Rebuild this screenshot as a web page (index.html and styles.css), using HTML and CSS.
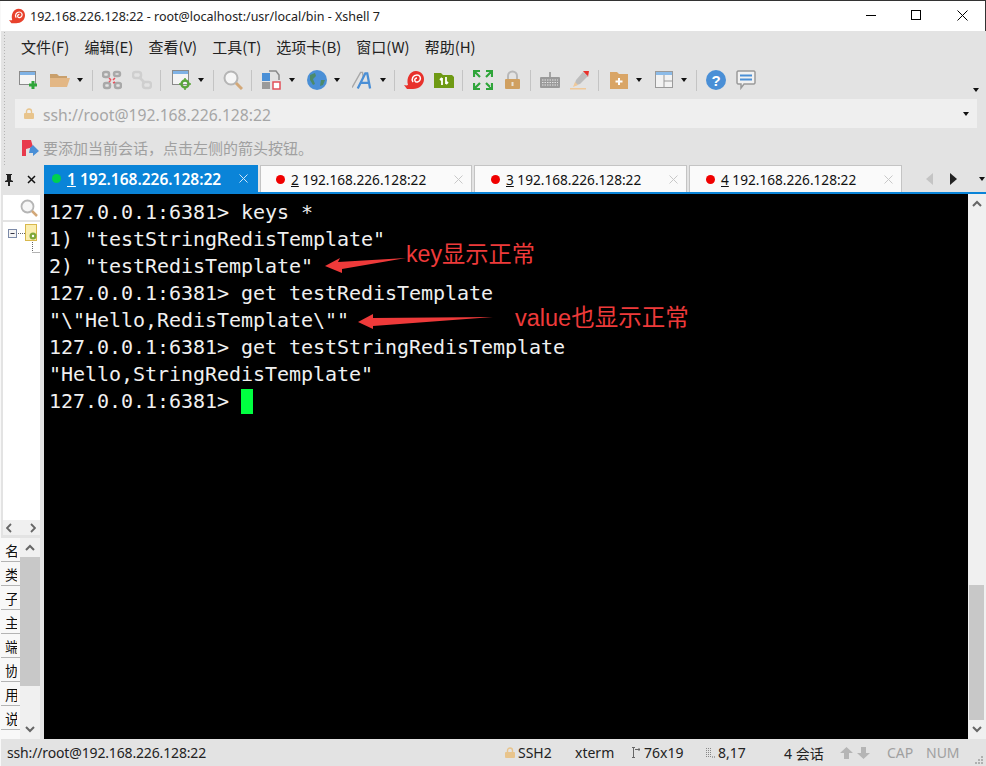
FILE: index.html
```html
<!DOCTYPE html>
<html lang="zh">
<head>
<meta charset="utf-8">
<title>Xshell 7</title>
<link rel="stylesheet" href="styles.css">
</head>
<body>
<div class="app">
  <header class="titlebar">
    <svg class="snail" viewBox="0 0 20 20"><path d="M0 15c3 1 4 0 4 0C2 8 6 1 12 1c5 0 8 4 8 8 0 6-5 10-11 10H3z" fill="#e8412c"/><path d="M9 12c-2-3 0-7 4-7 3 0 4 3 3 5s-4 3-5 1 1-3 2-3" fill="none" stroke="#fff" stroke-width="1.500"/></svg>
    <span class="title-text">192.168.226.128:22 - root@localhost:/usr/local/bin - Xshell 7</span>
    <div class="winctl">
      <svg class="wc" viewBox="0 0 45 12"><path d="M0 5.500h10" stroke="#000"/></svg>
      <svg class="wc wc-max" viewBox="0 0 46 12"><rect x=".5" y=".5" width="9" height="9" fill="none" stroke="#000"/></svg>
      <svg class="wc wc-close" viewBox="0 0 28 12"><path d="M.5.500l10 10M10.500.500l-10 10" stroke="#000" fill="none"/></svg>
    </div>
  </header>

  <div class="chrome">
    <nav class="menu">
      <span class="m">文件(F)</span><span class="m">编辑(E)</span><span class="m">查看(V)</span><span class="m">工具(T)</span><span class="m">选项卡(B)</span><span class="m">窗口(W)</span><span class="m">帮助(H)</span>
    </nav>
    <div class="toolbar">
      <svg class="ic" viewBox="0 0 20 20"><rect x=".5" y="1.500" width="16" height="13" fill="#f4f4f4" stroke="#8a8a8a"/><rect x="1" y="2" width="15" height="3" fill="#7fb2e5"/><path d="M14 11v8M10 15h8" stroke="#2fa53a" stroke-width="3"/></svg>
      <svg class="ic g11" viewBox="0 0 20 20"><path d="M0 4h7l2 2h8v3H0z" fill="#c99f6b"/><path d="M0 17V8h20l-3 9z" fill="#e3b785"/></svg>
      <i class="car"></i><i class="sep"></i>
      <svg class="ic g9" viewBox="0 0 20 20"><g fill="none" stroke="#a9a9a9" stroke-width="2.500"><rect x="1" y="2" width="6" height="5" rx="2"/><rect x="13" y="13" width="6" height="5" rx="2"/><rect x="12" y="2" width="6" height="4" rx="2"/><rect x="2" y="13" width="6" height="5" rx="2"/></g><path d="M7 8l2 2M13 8l-2 2M7 12l2-2M13 12l-2 1" stroke="#e8505b" stroke-width="1.500"/></svg>
      <svg class="ic" viewBox="0 0 20 20"><g fill="none" stroke="#cfcfcf" stroke-width="2.500"><rect x="1" y="2" width="8" height="6" rx="2.500"/><rect x="11" y="12" width="8" height="6" rx="2.500"/><path d="M7 7l6 6"/></g></svg>
      <i class="sep g8"></i>
      <svg class="ic g11" viewBox="0 0 20 20"><rect x=".5" y=".5" width="16" height="14" fill="#f4f4f4" stroke="#8a8a8a"/><rect x="1" y="1" width="15" height="3" fill="#7fb2e5"/><circle cx="13" cy="14" r="3.500" fill="none" stroke="#5aa53a" stroke-width="2.500"/><path d="M13 8v3M13 17v3M7 14h3M16 14h3" stroke="#5aa53a" stroke-width="1.500"/></svg>
      <i class="car g6"></i><i class="sep"></i>
      <svg class="ic g9" viewBox="0 0 20 20"><circle cx="8" cy="8" r="6.500" fill="#f6f6f6" stroke="#b5b5b5" stroke-width="2"/><path d="M13 13l6 6" stroke="#d3a878" stroke-width="3"/></svg>
      <i class="sep g8"></i>
      <svg class="ic" viewBox="0 0 20 20"><rect x="0" y="3" width="8" height="8" fill="#4a8fd6"/><rect x="0" y="12" width="8" height="7" fill="#9a9a9a"/><rect x="11" y="12" width="7" height="7" fill="#fff" stroke="#e2505a" stroke-width="1.500"/><path d="M7 1h7l3 4v5" fill="none" stroke="#8a8a8a" stroke-width="1.500"/></svg>
      <i class="car"></i>
      <svg class="ic g12" viewBox="0 0 20 20"><circle cx="10" cy="10" r="10" fill="#4a8fd6"/><path d="M3 5l5-2 1 3-3 3 2 5-2 1-3-5zM14 10l4 0-2 5-3 1z" fill="#4c8a6a"/></svg>
      <i class="car"></i>
      <svg class="ic g12" viewBox="0 0 21 20"><path d="M0 18L9 2h2l1 6" fill="none" stroke="#a8a8a8" stroke-width="1.500"/><path d="M6 19L14 3h2l3 16M9 13h9" fill="none" stroke="#4a8fd6" stroke-width="2.400"/></svg>
      <i class="car g8"></i><i class="sep g8"></i>
      <svg class="ic g9" viewBox="0 0 20 20"><path d="M0 15c3 1 4 0 4 0C2 8 6 1 12 1c5 0 8 4 8 8 0 6-5 10-11 10H3z" fill="#e8322c"/><path d="M9 12c-2-3 0-7 4-7 3 0 4 3 3 5s-4 3-5 1 1-3 2-3" fill="none" stroke="#fff" stroke-width="1.500"/></svg>
      <svg class="ic" viewBox="0 0 20 20"><path d="M0 3h7l2 2h9l2 2v11H0z" fill="#6f9a14"/><path d="M8 8v7M8 8l-2 2M12 14V7M12 14l2-2" stroke="#fff" stroke-width="1.800" fill="none"/></svg>
      <i class="sep g8"></i>
      <svg class="ic" viewBox="0 0 20 20"><path d="M1 7V1h6M13 1h6v6M19 13v6h-6M7 19H1v-6M2 2l5 5M18 2l-5 5M18 18l-5-5M2 18l5-5" fill="none" stroke="#2fa53a" stroke-width="2.200"/></svg>
      <svg class="ic ic-lock g11" viewBox="0 0 17 20"><path d="M4 9V6a4.500 4.500 0 0 1 9 0v3" fill="none" stroke="#b8b8b8" stroke-width="2"/><rect x="1" y="9" width="15" height="10" rx="1" fill="#d0a060"/><rect x="7.500" y="12" width="2" height="4" fill="#e9e2d4"/></svg>
      <i class="sep"></i>
      <svg class="ic g9" viewBox="0 0 20 20"><path d="M10 2v5" stroke="#8f8f8f" stroke-width="1.500"/><rect x="0" y="7" width="20" height="11" rx="1" fill="#9a9a9a"/><path d="M2 10h16M2 12.500h16M2 15h16" stroke="#e3e3e3" stroke-dasharray="1.500 1"/></svg>
      <svg class="ic" viewBox="0 0 20 20"><path d="M13 1l6 0-1 6z" fill="#e8322c"/><path d="M13 2l5 4-8 8-6 2 2-6z" fill="#bdbdbd"/><path d="M5 12l3 3-5 2z" fill="#f0c99a"/><rect x="0" y="18" width="16" height="1.500" fill="#f0c99a"/></svg>
      <i class="sep g8"></i>
      <svg class="ic ic-add g11" viewBox="0 0 18 18"><path d="M0 1h7l2 2h9v15H0z" fill="#d9a566"/><path d="M9 7v7M5.500 10.500h7" stroke="#fff" stroke-width="2"/></svg>
      <i class="car g8"></i>
      <svg class="ic ic-layout g13" viewBox="0 0 18 18"><rect x=".5" y=".5" width="17" height="16" fill="#f2f2f2" stroke="#9a9a9a"/><rect x="1" y="1" width="16" height="3" fill="#8cbbe8"/><path d="M9 4v13M9 10h8" stroke="#9a9a9a"/></svg>
      <i class="car g8"></i><i class="sep"></i>
      <svg class="ic g9" viewBox="0 0 20 20"><circle cx="10" cy="10" r="10" fill="#4a8fd6"/><text x="10" y="15.500" class="qmark">?</text></svg>
      <svg class="ic" viewBox="0 0 20 20"><path d="M2 1h16l1 1v11l-1 1H8l-3 4v-4H2l-1-1V2z" fill="#f2f2f2" stroke="#9a9a9a" stroke-width="1.500"/><path d="M4 5.500h12M4 9.500h12" stroke="#4a8fd6" stroke-width="2"/></svg>
      <i class="car car-end"></i>
    </div>
    <div class="address">
      <svg class="lock" viewBox="0 0 10 11"><path d="M2.500 5V3.500a2.500 2.500 0 0 1 5 0V5" fill="none" stroke="#e8c48c" stroke-width="1.400"/><rect y="5" width="10" height="6" rx="1" fill="#e8c48c"/></svg>
      <span class="addr-text">ssh://root@192.168.226.128:22</span>
      <i class="car addr-car"></i>
    </div>
    <div class="tipbar">
      <svg class="flag" viewBox="0 0 17 16"><path d="M0 0h9l2 7-7 2v7H0z" fill="#e83a4c"/><path d="M8 8l3-3 6 6-6 5v-3H7z" fill="#4a8fd6"/></svg>
      <span>要添加当前会话，点击左侧的箭头按钮。</span>
    </div>
  </div>

  <div class="main">
    <aside class="side">
      <div class="side-head">
        <svg viewBox="0 0 10 12" class="pin"><path d="M2 0h6v1H7v5l2 1v1H6v4H4V8H1V7l2-1V1H2z" fill="#222"/></svg>
        <svg viewBox="0 0 9 9" class="side-x"><path d="M1 1l7 7M8 1L1 8" stroke="#111" stroke-width="1.500"/></svg>
      </div>
      <div class="side-search">
        <svg viewBox="0 0 18 18"><circle cx="7.500" cy="7.500" r="6" fill="#f6f6f6" stroke="#b5b5b5" stroke-width="1.800"/><path d="M12 12l5 5" stroke="#d3a878" stroke-width="2.500"/></svg>
      </div>
      <div class="tree">
        <svg viewBox="0 0 37 32"><rect x="5.500" y="7.500" width="8" height="8" fill="#f4f4f4" stroke="#7c8aa8"/><path d="M7.500 11.500h4" stroke="#334"/><path d="M15 11.500h7M29.500 18v12M29.500 30.500h7" stroke="#666" stroke-dasharray="1 1"/><rect x="22.500" y="2.500" width="11" height="16" fill="#fbeeb0" stroke="#d8b84c"/><circle cx="30" cy="14" r="3.500" fill="#7ea83a"/><circle cx="30" cy="14" r="1.200" fill="#fff"/></svg>
      </div>
      <div class="side-nav">
        <svg viewBox="0 0 6 10"><path d="M5 1L1 5l4 4" fill="none" stroke="#666" stroke-width="1.800"/></svg>
        <svg viewBox="0 0 6 10"><path d="M1 1l4 4-4 4" fill="none" stroke="#666" stroke-width="1.800"/></svg>
      </div>
      <div class="props">
        <ul class="prop-list">
          <li><span>名</span></li><li><span>类</span></li><li><span>子</span></li><li><span>主</span></li><li><span>端</span></li><li><span>协</span></li><li><span>用</span></li><li><span>说</span></li>
        </ul>
        <div class="mini-scroll">
          <svg class="sarrow" viewBox="0 0 10 7"><path d="M1 6l4-4 4 4" fill="none" stroke="#666" stroke-width="2"/></svg>
          <div class="mini-gap"><div class="mini-thumb"></div></div>
          <svg class="sarrow" viewBox="0 0 10 7"><path d="M1 1l4 4 4-4" fill="none" stroke="#666" stroke-width="2"/></svg>
        </div>
      </div>
    </aside>

    <section class="session">
      <div class="tabs">
        <div class="tab active"><i class="dot dot-on"></i><span class="tab-label"><u>1</u> 192.168.226.128:22</span><svg class="tab-x" viewBox="0 0 9 9"><path d="M.5.500l8 8M8.500.500l-8 8" stroke="#cfe6f8" fill="none"/></svg></div>
        <div class="tab tab-2"><i class="dot"></i><span class="tab-label"><u>2</u> 192.168.226.128:22</span><svg class="tab-x" viewBox="0 0 9 9"><path d="M.5.500l8 8M8.500.500l-8 8" stroke="#c8c8c8" fill="none"/></svg></div>
        <div class="tab"><i class="dot"></i><span class="tab-label"><u>3</u> 192.168.226.128:22</span><svg class="tab-x" viewBox="0 0 9 9"><path d="M.5.500l8 8M8.500.500l-8 8" stroke="#c8c8c8" fill="none"/></svg></div>
        <div class="tab"><i class="dot"></i><span class="tab-label"><u>4</u> 192.168.226.128:22</span><svg class="tab-x" viewBox="0 0 9 9"><path d="M.5.500l8 8M8.500.500l-8 8" stroke="#c8c8c8" fill="none"/></svg></div>
        <div class="tab-tools">
          <svg viewBox="0 0 7 12"><path d="M7 0v12L0 6z" fill="#c4c4c4"/></svg>
          <svg viewBox="0 0 7 12"><path d="M0 0v12l7-6z" fill="#222"/></svg>
          <i class="car"></i>
        </div>
      </div>
      <div class="term-row">
        <div class="terminal">
          <div class="screen">
            <div class="line">127.0.0.1:6381&gt; keys *</div>
            <div class="line">1) "testStringRedisTemplate"</div>
            <div class="line">2) "testRedisTemplate"</div>
            <div class="line">127.0.0.1:6381&gt; get testRedisTemplate</div>
            <div class="line">"\"Hello,RedisTemplate\""</div>
            <div class="line">127.0.0.1:6381&gt; get testStringRedisTemplate</div>
            <div class="line">"Hello,StringRedisTemplate"</div>
            <div class="line">127.0.0.1:6381&gt; <span class="cursor"></span></div>
          </div>
          <svg class="arrows" viewBox="0 0 924 545"><path d="M281 72L296 64 294 68 362 64 298 75 298 79zM314 128L329 120 329 124 449 123 329 132 329 135z" fill="#ee3a3a"/></svg>
          <span class="note note-key">key显示正常</span>
          <span class="note note-value">value也显示正常</span>
        </div>
        <div class="vscroll">
          <svg class="sarrow" viewBox="0 0 10 7"><path d="M1 6l4-4 4 4" fill="none" stroke="#666" stroke-width="2"/></svg>
          <div class="v-track"><div class="v-thumb"></div></div>
          <svg class="sarrow" viewBox="0 0 10 7"><path d="M1 1l4 4 4-4" fill="none" stroke="#666" stroke-width="2"/></svg>
        </div>
      </div>
    </section>
  </div>

  <footer class="status">
    <span class="st-path">ssh://root@192.168.226.128:22</span>
    <svg class="st-lock" viewBox="0 0 10 11"><path d="M2.500 5V3.500a2.500 2.500 0 0 1 5 0V5" fill="none" stroke="#e8c48c" stroke-width="1.400"/><rect y="5" width="10" height="6" rx="1" fill="#e8c48c"/></svg>
    <span class="st-ssh">SSH2</span>
    <span class="st-term">xterm</span>
    <svg class="st-size" viewBox="0 0 9 11"><path d="M2.500 1v9M1 10.500h3M1 .5h3M4 2.500h5M7.500 1l1.500 1.500L7.500 4" fill="none" stroke="#666"/></svg>
    <span class="st-dim">76x19</span>
    <svg class="st-pos" viewBox="0 0 9 11"><path d="M.5 1v9M2.500 1v9M4.500 1v9" stroke="#888" stroke-dasharray="1 1"/><path d="M6 10h1M8 10h1" stroke="#666"/></svg>
    <span class="st-cur">8,17</span>
    <span class="st-count">4 会话</span>
    <svg class="st-arrow" viewBox="0 0 13 12"><path d="M6.500 0L13 6H9v6H4V6H0z" fill="#b5b5b5"/></svg>
    <svg class="st-arrow st-down" viewBox="0 0 13 12"><path d="M6.500 12L13 6H9V0H4v6H0z" fill="#b5b5b5"/></svg>
    <span class="st-cap">CAP</span>
    <span class="st-num">NUM</span>
    <svg class="st-grip" viewBox="0 0 8 8"><path d="M6 0h2v2H6zM3 3h2v2H3zM6 3h2v2H6zM0 6h2v2H0zM3 6h2v2H3zM6 6h2v2H6z" fill="#b0b0b0"/></svg>
  </footer>
</div>
</body>
</html>
```
FILE: styles.css
```css
* { box-sizing: border-box; }
html, body { margin: 0; padding: 0; background: #e3e3e3; overflow: hidden; }
svg { display: block; flex: none; }
i { display: block; flex: none; }

.app {
  width: 986px; height: 766px; position: relative;
  display: flex; flex-direction: column;
  font-family: "Noto Sans", "Noto Sans CJK SC", sans-serif;
  color: #111;
  border-top: 1px solid #333;
}
.app::before {
  content: ""; position: absolute; left: 0; top: 0; bottom: 0; width: 1px; background: #f8f8f8;
}

/* title bar */
.titlebar {
  height: 30px; background: #fff; flex: none;
  display: flex; align-items: center; padding-left: 9px;
  border-right: 1px solid #333;
}
.snail { width: 16px; height: 16px; }
.title-text { margin-left: 5px; font-size: 12.5px; white-space: nowrap; color: #222; }
.winctl { margin-left: auto; display: flex; align-items: center; }
.wc { width: 45px; height: 12px; }
.wc-max { width: 46px; }
.wc-close { width: 28px; }

/* chrome */
.chrome {
  flex: none; background: #e3e3e3; height: 134px;
  display: flex; flex-direction: column;
  background-image: radial-gradient(circle, #b5b5b5 0.8px, transparent 1px);
  background-size: 3px 3px; background-repeat: repeat-y; background-position: 3px 0;
}
.menu {
  height: 30px; flex: none; display: flex; align-items: center;
  padding-left: 21px; white-space: nowrap;
}
.m { margin-right: 15px; color: #222; font-family: "Noto Sans CJK SC", sans-serif; font-size: 15px; }
.toolbar {
  height: 38px; flex: none; display: flex; align-items: center;
  padding-left: 9px;
}
.ic { width: 20px; height: 20px; margin-left: 10px; }
.ic-lock { width: 17px; }
.ic-add, .ic-layout { width: 18px; height: 18px; }
.car {
  width: 0; height: 0; margin-left: 7px;
  border-left: 3px solid transparent; border-right: 3px solid transparent;
  border-top: 4px solid #111;
}
.sep { width: 1px; height: 21px; background: #c4c4c4; margin-left: 9px; }
.toolbar .g6 { margin-left: 6px; }
.toolbar .g8 { margin-left: 8px; }
.toolbar .g9 { margin-left: 9px; }
.toolbar .g11 { margin-left: 11px; }
.toolbar .g12 { margin-left: 12px; }
.toolbar .g13 { margin-left: 13px; }
.toolbar .car-end { margin-left: auto; margin-right: 7px; align-self: flex-end; margin-bottom: 7px; }
.qmark { font: bold 15px "Liberation Sans", sans-serif; fill: #fff; text-anchor: middle; }

.address {
  height: 29px; flex: none; margin: 0 9px 0 15px; background: #efefef;
  display: flex; align-items: center; padding-left: 9px;
}
.lock { width: 10px; height: 11px; }
.addr-text { margin: 2px 0 0 9px; color: #a6a6a6; font-size: 15.700px; white-space: nowrap; }
.addr-car { margin-left: auto; margin-right: 8px; }

.tipbar {
  flex: 1; display: flex; align-items: center; padding: 2px 0 0 22px;
  font-family: "Noto Sans CJK SC", sans-serif; font-size: 15px; color: #a0a0a0; white-space: nowrap;
}
.flag { width: 17px; height: 16px; margin-right: 4px; }

/* main */
.main { flex: 1; display: flex; min-height: 0; }
.side {
  width: 44px; flex: none; background: #e3e3e3;
  display: flex; flex-direction: column;
}
.side-head {
  height: 29px; flex: none; display: flex; align-items: center; gap: 13px; padding-left: 4px;
}
.pin { width: 10px; height: 12px; }
.side-x { width: 9px; height: 9px; }
.side-search {
  height: 25px; flex: none; margin: 1px 4px 0 3px; background: #fff;
  display: flex; justify-content: flex-end; align-items: center; padding-right: 2px;
}
.side-search svg { width: 18px; height: 18px; }
.tree { flex: 1; margin: 2px 4px 0 3px; background: #fff; min-height: 0; }
.tree svg { width: 37px; height: 32px; }
.side-nav {
  height: 15px; flex: none; margin: 0 4px 3px 3px; background: #f0f0f0;
  display: flex; align-items: center; justify-content: space-between; padding: 0 4px 0 3px;
}
.side-nav svg { width: 6px; height: 10px; }
.props { height: 201px; flex: none; display: flex; margin: 0 4px 0 1px; }
.prop-list {
  list-style: none; margin: 0; padding: 0; width: 19px; flex: none; background: #f8f8f8; overflow: hidden;
}
.prop-list li {
  height: 24px; border-bottom: 1px solid #b4b4b4; display: flex; align-items: center;
  padding-left: 4px;
}
.prop-list span {
  display: block; width: 12px; overflow: hidden; font-size: 14px; line-height: 20px;
  font-family: "Noto Sans CJK SC", sans-serif; white-space: nowrap; color: #111;
}
.mini-scroll {
  flex: 1; background: #f0f0f0; display: flex; flex-direction: column; align-items: center;
}
.sarrow { width: 10px; height: 7px; margin: 6px 0; flex: none; }
.mini-gap { flex: 1; width: 100%; min-height: 0; }
.mini-thumb { height: 129px; background: #c8c8c8; }

.session { flex: 1; display: flex; flex-direction: column; min-width: 0; }
.tabs {
  height: 29px; flex: none; display: flex; align-items: stretch; gap: 2px;
  border-bottom: 2px solid #0a84d8;
}
.tab {
  width: 213px; display: flex; align-items: center; background: #fafafa;
  border: 1px solid #c4c4c4; border-bottom: 0; padding-left: 15px; font-size: 13.650px; white-space: nowrap;
}
.tab + .tab ~ .tab { padding-left: 16px; }
.tab-2 { width: 212px; }
.tab.active {
  width: 214px; background: #0a84d8; border: 0; color: #fff; font-weight: 600; font-size: 15.500px; padding-left: 8px;
}
.dot { width: 9px; height: 9px; border-radius: 50%; background: #f00000; margin-right: 6px; }
.dot-on { background: #00d050; margin-right: 6px; }
.tab-label { flex: 1; }
.tab-x { width: 9px; height: 9px; margin-right: 8px; }
.active .tab-x { margin-right: 10px; }
.tab-tools { flex: 1; display: flex; align-items: center; padding-left: 22px; gap: 17px; }
.tab-tools svg { width: 7px; height: 12px; }
.tab-tools .car { margin-left: 5px; }

.term-row { flex: 1; display: flex; min-height: 0; }
.terminal { flex: 1; background: #000; position: relative; overflow: hidden; }
.screen {
  padding: 5px 0 0 5px;
  font-family: "DejaVu Sans Mono", monospace; font-size: 20px; line-height: 27px; color: #f0f0f0;
  letter-spacing: -.04px;
}
.line { width: fit-content; white-space: pre; height: 27px; }
.cursor { display: inline-block; width: 12px; height: 25px; background: #00ff40; vertical-align: -6px; }
.arrows { position: absolute; left: 0; top: 0; width: 924px; height: 545px; }
.note {
  position: absolute; color: #ee3a3a; font-size: 23.200px; line-height: 30px; white-space: nowrap;
  font-family: "Liberation Sans", "Noto Sans CJK SC", sans-serif;
}
.note-key { left: 362px; top: 45px; }
.note-value { left: 471px; top: 109px; font-size: 23.500px; }
.vscroll {
  width: 18px; flex: none; background: #f0f0f0; display: flex; flex-direction: column; align-items: center;
}
.v-track { flex: 1; width: 100%; padding: 0 2px 0 1px; display: flex; align-items: flex-end; min-height: 0; }
.v-thumb { width: 100%; height: 135px; background: #c8c8c8; }

/* status bar */
.status {
  height: 27px; flex: none; background: #e3e3e3; display: flex; align-items: center;
  font-size: 14px; white-space: nowrap; color: #222;
}
.st-path { margin-left: 7px; width: 498px; flex: none; letter-spacing: -.15px; }
.st-lock { width: 10px; height: 11px; }
.st-ssh { margin-left: 3px; width: 57px; flex: none; }
.st-term { width: 56px; flex: none; }
.st-size { width: 9px; height: 11px; }
.st-dim { margin-left: 4px; width: 62px; flex: none; }
.st-pos { width: 9px; height: 11px; }
.st-cur { margin-left: 3px; width: 66px; flex: none; }
.st-count { width: 56px; flex: none; }
.st-arrow { width: 13px; height: 12px; }
.st-down { margin-left: 4px; }
.st-cap { margin-left: 17px; width: 39px; flex: none; color: #a0a0a0; }
.st-num { width: 49px; flex: none; color: #a0a0a0; }
.st-grip { width: 8px; height: 8px; align-self: flex-end; margin-bottom: 2px; }
```
